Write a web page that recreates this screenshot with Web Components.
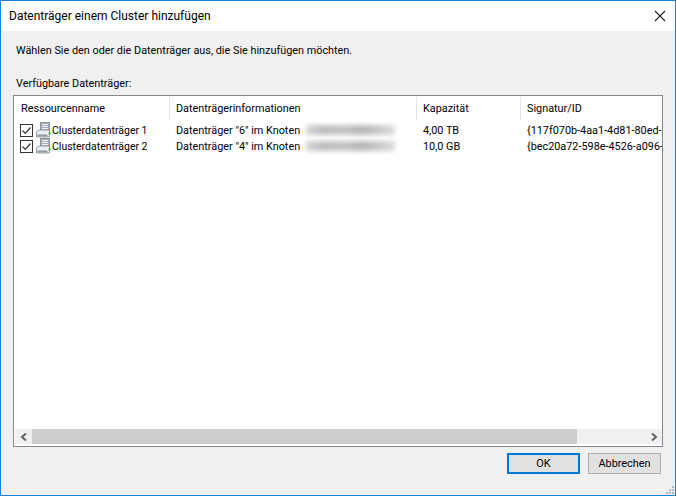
<!DOCTYPE html>
<html lang="de">
<head>
<meta charset="utf-8">
<title>Datenträger einem Cluster hinzufügen</title>
<style>
html, body { margin: 0; padding: 0; height: 100%; overflow: hidden; background: #f0f0f0; }
body { font: 10.85px Roboto, "Noto Sans", sans-serif; color: #000; }
</style>
</head>
<body>
<dialog-window heading="Datenträger einem Cluster hinzufügen">
    <div slot="intro">Wählen Sie den oder die Datenträger aus, die Sie hinzufügen möchten.</div>
    <div slot="label">Verfügbare Datenträger:</div>
    <disk-list>
        <disk-row name="Clusterdatenträger 1" info="Datenträger &quot;6&quot; im Knoten" size="4,00 TB" sig="{117f070b-4aa1-4d81-80ed-"></disk-row>
        <disk-row name="Clusterdatenträger 2" info="Datenträger &quot;4&quot; im Knoten" size="10,0 GB" sig="{bec20a72-598e-4526-a096-"></disk-row>
    </disk-list>
    <dialog-button slot="buttons" primary>OK</dialog-button>
    <dialog-button slot="buttons">Abbrechen</dialog-button>
</dialog-window>

<script>
class DialogWindow extends HTMLElement {
    constructor()
    {
        super();
        this.attachShadow({ mode: 'open' });
        this.shadowRoot.innerHTML = `
            <style>
                :host { display: flex; flex-direction: column; box-sizing: border-box; position: relative; width: 676px; height: 496px; border: 1px solid #1883d7; background: #f0f0f0; }
                .title { display: flex; align-items: center; justify-content: space-between; height: 30px; flex: none; background: #fff; padding: 0 9px 0 8px; font-size: 12px; }
                .close { display: block; width: 12px; height: 12px; }
                .body { display: flex; flex-direction: column; flex: 1; min-height: 0; padding: 0 12px 0 12px; }
                .intro { margin: 11px 0 0 3px; height: 17px; line-height: 17px; }
                .label { margin: 16px 0 0 3px; height: 17px; line-height: 17px; }
                .list { display: flex; flex: none; margin-top: 3px; height: 352px; }
                .buttons { display: flex; justify-content: flex-end; gap: 8px; margin: 6px 2px 0 0; }
                .grip { position: absolute; right: 1px; bottom: 1px; width: 8px; height: 8px; }
            </style>
            <div class="title"><span id="heading"></span>
                <svg class="close" viewBox="0 0 12 12"><path d="M1 1 L11 11 M11 1 L1 11" stroke="#222" stroke-width="1.1" fill="none"/></svg>
            </div>
            <div class="body">
                <div class="intro"><slot name="intro"></slot></div>
                <div class="label"><slot name="label"></slot></div>
                <div class="list"><slot></slot></div>
                <div class="buttons"><slot name="buttons"></slot></div>
            </div>
            <svg class="grip" viewBox="0 0 8 8" fill="#b9b9b9">
                <rect x="6" y="0" width="2" height="2"/>
                <rect x="3" y="3" width="2" height="2"/><rect x="6" y="3" width="2" height="2"/>
                <rect x="0" y="6" width="2" height="2"/><rect x="3" y="6" width="2" height="2"/><rect x="6" y="6" width="2" height="2"/>
            </svg>
        `;
        this.shadowRoot.getElementById('heading').textContent = this.getAttribute('heading');
    }
}

class DiskList extends HTMLElement {
    constructor()
    {
        super();
        this.attachShadow({ mode: 'open' });
        this.shadowRoot.innerHTML = `
            <style>
                :host { display: flex; flex-direction: column; flex: 1; min-width: 0; box-sizing: border-box; border: 1px solid #828790; background: #fff; }
                .head { display: grid; grid-template-columns: 156px 247px 104px 1fr; height: 26px; flex: none; padding-top: 1px; box-sizing: border-box; overflow: hidden; }
                .head div { border-right: 1px solid #e5e5e5; padding: 1px 0 0 6px; line-height: 22px; height: 23px; box-sizing: border-box; }
                .head div:first-child { padding-left: 7px; }
                .head div:last-child { border-right: 0; }
                .rows { flex: 1; min-height: 0; overflow: hidden; }
                list-scrollbar { flex: none; }
            </style>
            <div class="head"><div>Ressourcenname</div><div>Datenträgerinformationen</div><div>Kapazität</div><div>Signatur/ID</div></div>
            <div class="rows"><slot></slot></div>
            <list-scrollbar></list-scrollbar>
        `;
    }
}

class DiskRow extends HTMLElement {
    constructor()
    {
        super();
        this.attachShadow({ mode: 'open' });
        this.shadowRoot.innerHTML = `
            <style>
                :host { display: grid; grid-template-columns: 156px 247px 104px 1fr; height: 16px; line-height: 15px; white-space: nowrap; overflow: hidden; }
                .name { display: flex; align-items: center; padding-left: 6px; }
                .check { display: block; width: 13px; height: 13px; flex: none; }
                .icon { display: block; width: 16px; height: 16px; margin: 0 1px 0 2px; flex: none; }
                .info { display: flex; align-items: center; padding-left: 6px; }
                #name, #info, .size, .sig { padding-top: 1px; }
                #name { font-size: 10.5px; }
                .blur { width: 89px; height: 10px; margin-left: 6px; flex: none; filter: blur(2.5px); background: linear-gradient(90deg, #d4d4d4, #bcbcbc 20%, #c4c4c4 45%, #b4b4b4 62%, #cbcbcb 85%, #dcdcdc); }
                .size { padding-left: 6px; }
                .sig { padding-left: 6px; overflow: hidden; }
            </style>
            <div class="name">
                <svg class="check" viewBox="0 0 13 13"><rect x=".5" y=".5" width="12" height="12" fill="#fff" stroke="#333"/><path d="M2.5 6.5 L5.3 9.3 L10.5 3.5" fill="none" stroke="#333" stroke-width="1.2"/></svg>
                <svg class="icon" viewBox="0 0 16 16">
                    <rect x="5.5" y="0.5" width="9" height="8" fill="#a3acb2" stroke="#7a858c" stroke-width=".8"/>
                    <path d="M7 2.5h6M7 4.5h6M7 6.5h6" stroke="#f2f4f5" stroke-width="1"/>
                    <path d="M1.5 10 L4 8 H14.5 V15 H1.5 Z" fill="#eceff1" stroke="#7f8a92" stroke-width=".8"/>
                    <rect x="2.5" y="12.5" width="10" height="2" fill="#8f9aa2"/>
                    <rect x="13.5" y="10" width="2" height="2.5" fill="#4fbf3a"/>
                </svg>
                <span id="name"></span>
            </div>
            <div class="info"><span id="info"></span><div class="blur"></div></div>
            <div class="size" id="size"></div>
            <div class="sig" id="sig"></div>
        `;
        for (const key of ['name', 'info', 'size', 'sig']) {
            this.shadowRoot.getElementById(key).textContent = this.getAttribute(key);
        }
    }
}

class ListScrollbar extends HTMLElement {
    constructor()
    {
        super();
        this.attachShadow({ mode: 'open' });
        this.shadowRoot.innerHTML = `
            <style>
                :host { display: flex; height: 15px; margin: 0 0 2px 1px; background: #f0f0f0; }
                .arrow { display: flex; align-items: center; justify-content: center; width: 17px; flex: none; }
                .arrow svg { display: block; width: 8px; height: 8px; }
                .track { flex: 1; display: flex; }
                .thumb { width: 545px; background: #cdcdcd; }
            </style>
            <div class="arrow"><svg viewBox="0 0 8 8"><path d="M6 0.5 L2 4 L6 7.5" fill="none" stroke="#606060" stroke-width="2"/></svg></div>
            <div class="track"><div class="thumb"></div></div>
            <div class="arrow"><svg viewBox="0 0 8 8"><path d="M2 0.5 L6 4 L2 7.5" fill="none" stroke="#606060" stroke-width="2"/></svg></div>
        `;
    }
}

class DialogButton extends HTMLElement {
    constructor()
    {
        super();
        this.attachShadow({ mode: 'open' });
        this.shadowRoot.innerHTML = `
            <style>
                :host { display: flex; align-items: center; justify-content: center; box-sizing: border-box; width: 73px; height: 21px; background: #e1e1e1; border: 1px solid #adadad; }
                :host([primary]) { border: 2px solid #0078d7; }
            </style>
            <slot></slot>
        `;
    }
}

customElements.define('dialog-window', DialogWindow);
customElements.define('disk-list', DiskList);
customElements.define('disk-row', DiskRow);
customElements.define('list-scrollbar', ListScrollbar);
customElements.define('dialog-button', DialogButton);
</script>
</body>
</html>
